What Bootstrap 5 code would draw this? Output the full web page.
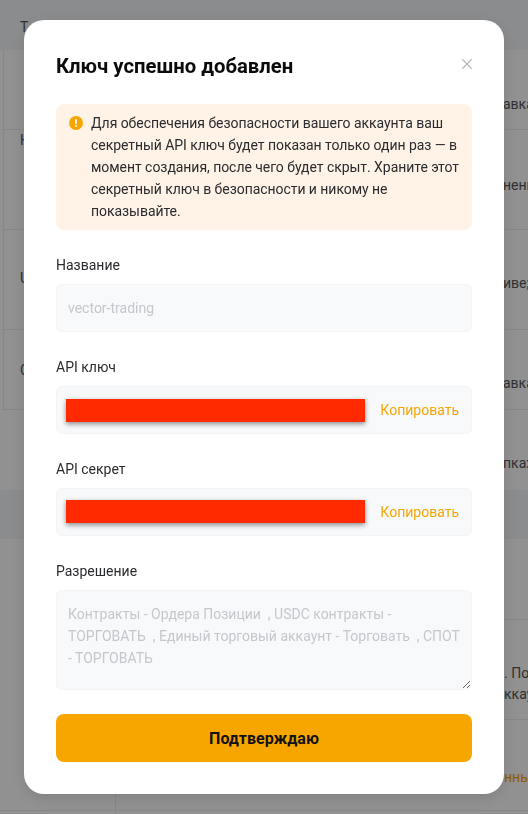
<!DOCTYPE html>
<html lang="ru">
<head>
<meta charset="utf-8">
<link href="https://cdn.jsdelivr.net/npm/bootstrap@5.3.0/dist/css/bootstrap.min.css" rel="stylesheet">
<style>
html,body{height:100%;overflow:hidden}
body{font-family:"Roboto","Noto Sans",sans-serif;background:#fff;color:#121214}
.pg{height:814px;overflow:hidden;font-size:14px;line-height:21px;color:#55565a;background:#fff;white-space:nowrap}
.pg-head{height:50px;background:#f5f6f8;padding:17px 20px 0}
.tbl{margin-left:3px;border-left:1px solid #eceef1}
.pg-row{border-bottom:1px solid #eceef1;display:flex;align-items:flex-start}
.lft{flex:0 0 499px;padding-left:16px}
.r1{height:80px}.r2{height:100px}.r3{height:100px}.r4{height:80px}
.r5{height:80px;margin-left:4px}
.band{height:49px;background:#f5f6f8}
.low{margin-left:115px;border-left:1px solid #eceef1}
.low .pg-row{padding-left:388px}
.r6{height:81px}
.r7{height:100px;padding-top:43px}
.r8{height:90px;padding-top:47px;border-bottom:0}
.t30{margin-top:30px}.t38{margin-top:38px}.t43{margin-top:43px}.t45{margin-top:45px}.t44{margin-top:44px}
.tail{color:#f7a600}
.foot{border-top:1px solid #eceef1;height:4px}
.foot-in{height:4px;margin-left:115px;border-left:1px solid #eceef1}
.overlay{position:fixed;inset:0;background:rgba(0,0,0,.43);display:flex;align-items:flex-start;justify-content:center;padding-top:20px}
.dlg{width:480px;height:774px;background:#fff;border-radius:20px;padding:32px;box-shadow:0 4px 16px rgba(0,0,0,.12);flex:none}
.dlg-title{font-size:20.3px;line-height:28px;font-weight:700;color:#0b0b0d;margin:0}
.dlg-close{width:10px;height:10px;margin-top:-4px;color:#adb1b8;flex:none}
.note{background:#fff3e8;border-radius:8px;padding:8px 12px;margin-top:24px;height:126px;gap:8px;font-size:14px;line-height:22px;color:#2a2b2e;letter-spacing:-.05px}
.note svg{flex:none;margin:4px 0 0 1px}
.lbl{font-size:14px;line-height:22px;color:#2a2b2e;margin:24px 0 8px}
.fld{height:48px;background:#f8f9fb;border:1px solid #f3f4f6;border-radius:6px;padding:0 12px 0 11px;font-size:14px;color:#c4c7cc}
.blot{width:299px;height:23px;background:#ff2a00;box-shadow:0 2px 5px rgba(0,0,0,.45);margin-left:-2px;flex:none}
.blot-up{margin-top:-2px}
.copy{color:#f7a600;font-size:14px;font-weight:400}
.area{display:block;width:100%;height:100px;background:#f8f9fb;border:1px solid #f3f4f6;border-radius:6px;padding:12px 11px;font-size:14px;line-height:22px;color:#c4c7cc;resize:vertical;outline:0}
.go{height:48px;width:100%;background:#f7a600;border:0;border-radius:8px;font-size:16px;font-weight:700;color:#121214;margin-top:24px;padding-top:7px}
.go:hover{background:#f7a600;color:#121214}
</style>
</head>
<body>
<div class="pg">
  <div class="pg-head">T</div>
  <div class="tbl">
    <div class="pg-row r1"><span class="lft"></span><span class="t44">авка</span></div>
    <div class="pg-row r2"><span class="lft">H</span><span class="t45">ненн</span></div>
    <div class="pg-row r3"><span class="lft t38">U</span><span class="t43">иве;</span></div>
    <div class="pg-row r4"><span class="lft t30">C</span><span class="t43">авка</span></div>
  </div>
  <div class="pg-row r5 border-0"><span class="lft"></span><span class="t43">пках</span></div>
  <div class="band"></div>
  <div class="low">
    <div class="pg-row r6"></div>
    <div class="pg-row r7"><span>. Пос<br>ккаун</span></div>
    <div class="pg-row r8"><span class="tail">нные</span></div>
  </div>
  <div class="foot"><div class="foot-in"></div></div>
</div>
<div class="overlay">
  <div class="dlg">
    <div class="d-flex justify-content-between align-items-center">
      <h5 class="dlg-title">Ключ успешно добавлен</h5>
      <svg class="dlg-close" viewBox="0 0 10 10" fill="none" stroke="currentColor" stroke-width="1.2"><path d="M.3.3l9.4 9.4M9.7.3L.3 9.7"/></svg>
    </div>
    <div class="note d-flex">
      <svg width="14" height="14" viewBox="0 0 14 14"><circle cx="7" cy="7" r="7" fill="#f7a600"/><rect x="6.1" y="3" width="1.8" height="5.2" rx=".9" fill="#fff"/><circle cx="7" cy="10.1" r="1" fill="#fff"/></svg>
      <div>Для обеспечения безопасности вашего аккаунта ваш секретный API ключ будет показан только один раз — в момент создания, после чего будет скрыт. Храните этот секретный ключ в безопасности и никому не показывайте.</div>
    </div>
    <div class="lbl">Название</div>
    <div class="fld d-flex align-items-center">vector-trading</div>
    <div class="lbl">API ключ</div>
    <div class="fld d-flex align-items-center justify-content-between"><span class="blot"></span><span class="copy">Копировать</span></div>
    <div class="lbl">API секрет</div>
    <div class="fld d-flex align-items-center justify-content-between"><span class="blot blot-up"></span><span class="copy">Копировать</span></div>
    <div class="lbl">Разрешение</div>
    <textarea class="area" readonly>Контракты - Ордера Позиции  , USDC контракты - ТОРГОВАТЬ  , Единый торговый аккаунт - Торговать  , СПОТ - ТОРГОВАТЬ</textarea>
    <button class="btn go">Подтверждаю</button>
  </div>
</div>
<script src="https://cdn.jsdelivr.net/npm/bootstrap@5.3.0/dist/js/bootstrap.bundle.min.js"></script>
</body>
</html>
